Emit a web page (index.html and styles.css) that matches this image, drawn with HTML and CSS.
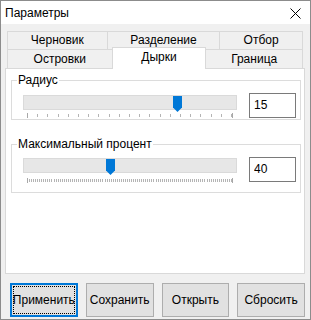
FILE: index.html
```html
<!DOCTYPE html>
<html lang="ru">
<head>
  <meta charset="UTF-8" />
  <title>Параметры</title>
  <link rel="stylesheet" href="styles.css">
</head>
<body>
  <div class="window">
    <div class="titlebar">
      <span class="title">Параметры</span>
      <svg class="close" width="11" height="11" viewBox="0 0 11 11">
        <path d="M0.5 0.5L10.5 10.5M10.5 0.5L0.5 10.5" stroke="#000" stroke-width="1" fill="none"/>
      </svg>
    </div>

    <div class="client">
      <div class="tabs">
        <div class="tab-row">
          <div class="tab t-draft">Черновик</div>
          <div class="tab t-split">Разделение</div>
          <div class="tab t-pick">Отбор</div>
        </div>
        <div class="tab-row">
          <div class="tab t-islands">Островки</div>
          <div class="tab t-holes active">Дырки</div>
          <div class="tab t-border">Граница</div>
        </div>
      </div>

      <div class="panel">
        <fieldset class="group g-radius">
          <legend>Радиус</legend>
          <div class="slider-row">
            <div class="slider">
              <div class="track">
                <svg class="thumb" style="left:149px" width="9" height="16" viewBox="0 0 9 16">
                  <path d="M0 0H9V11.5L4.5 16L0 11.5Z" fill="#0078d7"/>
                </svg>
              </div>
              <div class="ticks ticks-20"></div>
            </div>
            <input class="num" type="text" value="15">
          </div>
        </fieldset>

        <fieldset class="group g-percent">
          <legend>Максимальный процент</legend>
          <div class="slider-row">
            <div class="slider">
              <div class="track">
                <svg class="thumb" style="left:82px" width="9" height="16" viewBox="0 0 9 16">
                  <path d="M0 0H9V11.5L4.5 16L0 11.5Z" fill="#0078d7"/>
                </svg>
              </div>
              <div class="ticks ticks-100"></div>
            </div>
            <input class="num" type="text" value="40">
          </div>
        </fieldset>
      </div>

      <div class="buttons">
        <button class="btn focused">Применить</button>
        <button class="btn">Сохранить</button>
        <button class="btn">Открыть</button>
        <button class="btn">Сбросить</button>
      </div>
    </div>
  </div>
</body>
</html>
```

FILE: styles.css
```css
body {
  margin: 0;
  background: #fff;
  font-family: 'Liberation Sans', Arial, sans-serif;
  font-size: 12px;
  color: #000;
}

.window {
  width: 311px;
  height: 320px;
  box-sizing: border-box;
  border: 1px solid #8c8c8c;
  display: flex;
  flex-direction: column;
  background: #f0f0f0;
}

.titlebar {
  height: 23px;
  flex: none;
  background: #fff;
  display: flex;
  align-items: center;
  padding-left: 4px;
}

.title {
  font-size: 12px;
  flex: 1;
}

.close {
  margin-right: 9px;
  margin-top: 2px;
}

.client {
  flex: 1;
  padding: 7px 5px 0 4px;
}

/* tabs */
.tabs {
  margin: 0 2px;
}

.tab-row {
  display: flex;
  align-items: flex-start;
}

.tab {
  box-sizing: border-box;
  height: 18px;
  border: 1px solid #d9d9d9;
  border-bottom: none;
  background: #f0f0f0;
  text-align: center;
  line-height: 17px;
  margin-left: -1px;
}
.tab:first-child { margin-left: 0; }

.tab-row + .tab-row .tab { height: 19px; line-height: 18px; }

.t-draft   { width: 101px; }
.t-split   { width: 114px; }
.t-pick    { width: 84px; }
.t-islands { width: 106px; }
.t-holes   { width: 95px; }
.t-border  { width: 98px; }

.tab-row + .tab-row .tab.active {
  position: relative;
  z-index: 1;
  height: 22px;
  margin-top: -2px;
  margin-bottom: -1px;
  background: #fff;
  line-height: 19px;
}

.panel {
  box-sizing: border-box;
  height: 206px;
  border: 1px solid #d9d9d9;
  background: #fff;
  padding: 0 3px 0 5px;
}

/* group boxes */
.group {
  box-sizing: border-box;
  margin: 4px 0 0 0;
  padding: 0 0 0 5px;
  border: 1px solid #dcdcdc;
  min-width: 0;
}

.group legend {
  padding: 0 1px;
  line-height: 15px;
}

.g-radius { height: 47px; }
.g-percent { height: 56px; margin-top: 17px; }

.slider-row {
  display: flex;
  align-items: flex-start;
  margin-top: 5px;
  padding-left: 6px;
}

.slider {
  width: 214px;
  margin-right: 12px;
}

.track {
  position: relative;
  box-sizing: border-box;
  height: 15px;
  margin-top: 2px;
  background: #e7e7e7;
  border: 1px solid #dadada;
}

.g-percent .track { margin-top: 1px; }

.thumb {
  position: absolute;
  top: 0;
}

.ticks {
  height: 5px;
  margin: 3px 4px 0 4px;
}

.ticks-20 {
  background:
    linear-gradient(#a8a8a8, #a8a8a8) left top / 1px 5px no-repeat,
    linear-gradient(#a8a8a8, #a8a8a8) right top / 1px 5px no-repeat,
    repeating-linear-gradient(to right, #b4b4b4 0 1px, transparent 1px 10.2px) left 1px / 100% 3px no-repeat;
}

.g-percent .ticks { margin-top: 5px; }

.ticks-100 {
  background:
    linear-gradient(#a8a8a8, #a8a8a8) left top / 1px 5px no-repeat,
    linear-gradient(#a8a8a8, #a8a8a8) right top / 1px 5px no-repeat,
    repeating-linear-gradient(to right, #b4b4b4 0 1px, transparent 1px 2.04px) left 1px / 100% 3px no-repeat;
}

.num {
  box-sizing: border-box;
  width: 47px;
  height: 25px;
  border: 1px solid #7a7a7a;
  padding: 0 3px 2px 4px;
  font-family: 'Liberation Sans', Arial, sans-serif;
  font-size: 12px;
  color: #000;
  background: #fff;
  outline: none;
}

/* buttons */
.buttons {
  display: flex;
  gap: 8px;
  margin: 9px 0 0 5px;
}

.btn {
  box-sizing: border-box;
  width: 68px;
  height: 34px;
  background: #e1e1e1;
  border: 1px solid #adadad;
  font-family: 'Liberation Sans', Arial, sans-serif;
  font-size: 12px;
  color: #000;
  padding: 0;
}

.btn.focused {
  border: 2px solid #0078d7;
  outline: 1px dotted #000;
  outline-offset: -4px;
}
```
